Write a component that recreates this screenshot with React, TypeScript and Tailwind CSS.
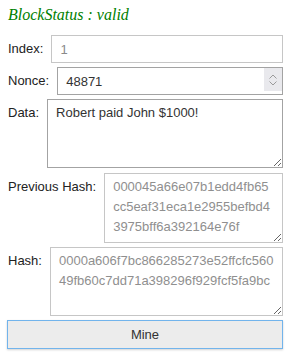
import { useState } from 'react';

const labelCls = 'shrink-0 mr-[8px] pt-[4px] leading-[20px] text-[#222]';
const boxCls =
  'block w-full border bg-white px-[8px] py-[3px] text-[13px] leading-[20px] outline-none';

const App = () => {
  const [nonce, setNonce] = useState('48871');
  const [data, setData] = useState('Robert paid John $1000!');

  const prevHash = '000045a66e07b1edd4fb65cc5eaf31eca1e2955befbd43975bff6a392164e76f';
  const hash = '0000a606f7bc866285273e52ffcfc56049fb60c7dd71a398296f929fcf5fa9bc';

  return (
    <div className="min-h-screen bg-white pt-[5px] font-['Liberation_Sans',Arial,sans-serif] text-[13px]">
      <div className="ml-2 w-[275px]">
        {/* Status */}
        <div className="font-['Liberation_Serif','Times_New_Roman',serif] text-[16px] italic leading-[20px] text-[#008000]">
          BlockStatus : valid
        </div>

        <div className="mt-[10px] flex flex-col">
          {/* Index */}
          <div className="flex items-start">
            <span className={labelCls}>Index:</span>
            <input
              readOnly
              value="1"
              className={`${boxCls} h-[28px] border-[#c6c6c6] text-[#8a8a8a]`}
            />
          </div>

          {/* Nonce */}
          <div className="mt-[4px] flex items-start">
            <span className={labelCls}>Nonce:</span>
            <div className="relative flex-1">
              <input
                value={nonce}
                onChange={(e) => setNonce(e.target.value)}
                className={`${boxCls} h-[28px] border-[#a3a3a3] pr-[24px] text-[#333]`}
              />
              <div className="absolute right-[1px] top-[1px] flex h-[23px] w-[18px] flex-col items-center justify-center gap-[2px] bg-[#e9e9ed]">
                <svg width="8" height="5" viewBox="0 0 8 5" fill="none">
                  <path d="M0.5 4.5 L4 1 L7.5 4.5" stroke="#9a9a9a" strokeWidth="1" />
                </svg>
                <svg width="8" height="5" viewBox="0 0 8 5" fill="none">
                  <path d="M0.5 0.5 L4 4 L7.5 0.5" stroke="#9a9a9a" strokeWidth="1" />
                </svg>
              </div>
            </div>
          </div>

          {/* Data */}
          <div className="mt-[4px] flex items-start">
            <span className={labelCls}>Data:</span>
            <textarea
              value={data}
              onChange={(e) => setData(e.target.value)}
              className={`${boxCls} h-[69px] border-[#a3a3a3] text-[#333]`}
            />
          </div>

          {/* Previous Hash */}
          <div className="mt-[5px] flex items-start">
            <span className={labelCls}>Previous Hash:</span>
            <textarea
              readOnly
              value={prevHash}
              className={`${boxCls} h-[70px] border-[#c6c6c6] pr-[7px] text-[#8f8f8f]`}
            />
          </div>

          {/* Hash */}
          <div className="mt-[4px] flex items-start">
            <span className={labelCls}>Hash:</span>
            <textarea
              readOnly
              value={hash}
              className={`${boxCls} h-[69px] border-[#c6c6c6] pr-[7px] text-[#8f8f8f]`}
            />
          </div>

          {/* Mine */}
          <button className="-ml-px mt-[4px] flex h-[29px] w-[276px] items-center justify-center border border-[#72b4ec] bg-[#ececec] text-[13px] text-[#333] shadow-[0_1px_2px_rgba(0,0,0,0.18)]">
            Mine
          </button>
        </div>
      </div>
    </div>
  );
};

export default App;
